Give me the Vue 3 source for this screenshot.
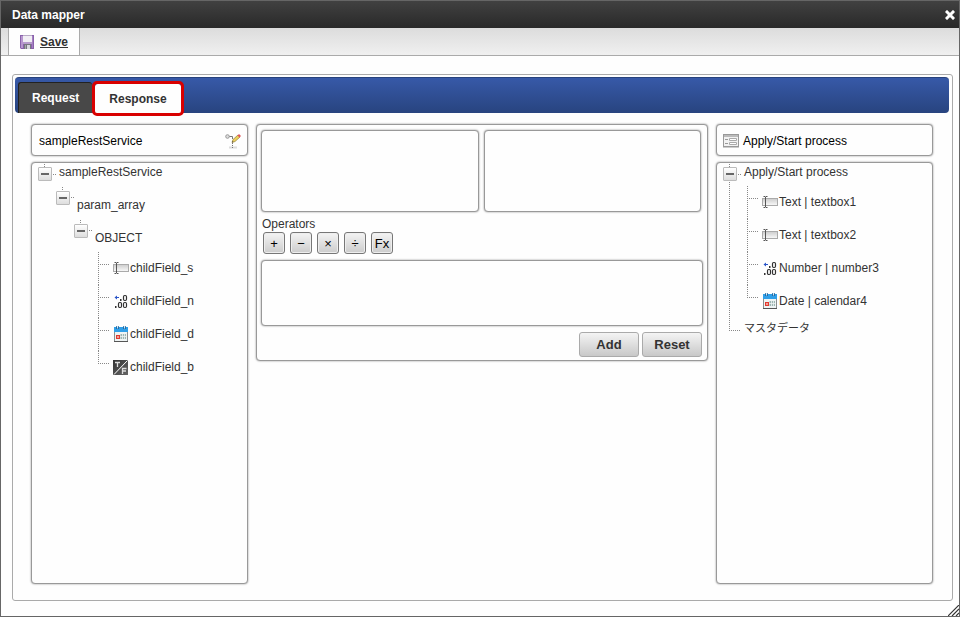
<template>
  <div class="dialog">
    <header class="title-bar">
      <h1>Data mapper</h1>
      <button class="close-button" aria-label="Close">
        <svg width="10" height="10" viewBox="0 0 10 10">
          <path d="M2 2L8 8M8 2L2 8" stroke="#fff" stroke-width="3" stroke-linecap="square" />
        </svg>
      </button>
    </header>

    <nav class="toolbar">
      <a href="#" class="save-link" @click.prevent>
        <svg width="14" height="14" viewBox="0 0 14 14">
          <path d="M0 0H14V14H1L0 13Z" fill="#8a62ab" />
          <path d="M1 1H3V13H1Z" fill="#b796cf" />
          <path d="M12 1H13V13H12Z" fill="#a57fc2" />
          <path d="M3 0H12V7H3Z" fill="#f1eef4" />
          <path d="M3 0H12V1H3Z" fill="#b9aac6" />
          <path d="M3 7H12V9H3Z" fill="#b79bcc" />
          <path d="M4 9H11V14H4Z" fill="#77777f" />
          <path d="M7 10H10V14H7Z" fill="#d8d8de" />
          <path d="M5 10H6V14H5Z" fill="#a5a5ad" />
        </svg>
        <span>Save</span>
      </a>
    </nav>

    <main class="content">
      <div class="mapper">
        <div class="tabs" role="tablist">
          <button
            v-for="tab in tabs"
            :key="tab"
            role="tab"
            :aria-selected="tab === activeTab"
            :class="['tab', { active: tab === activeTab }]"
            @click="activeTab = tab"
          >
            {{ tab }}
          </button>
        </div>

        <div class="columns">
          <section class="side">
            <div class="box side-header">
              <span class="side-title">sampleRestService</span>
              <button class="icon-button" aria-label="Edit">
                <svg width="16" height="16" viewBox="0 0 16 16">
                  <path d="M4 14.500H12" stroke="#ddd" stroke-width="2" />
                  <path d="M4 3.500H7.500V6M7.500 10V11M7.500 12V13M7.500 14V15" stroke="#777" fill="none" />
                  <circle cx="2.500" cy="3.500" r="1.800" fill="#ddd" stroke="#999" />
                  <path d="M7 9.500L8 6.500L13 2L15 4L10 8.500Z" fill="#ecd05c" stroke="#94803a" stroke-width=".7" />
                  <path d="M12.500 2.500L14 1L16 3L14.500 4.500Z" fill="#e0565b" />
                  <path d="M7 9.500L7.500 8L8.500 9Z" fill="#444" />
                </svg>
              </button>
            </div>
            <div class="box tree-box">
              <ul class="tree">
                <li class="node">
                  <div class="row root-row">
                    <button class="toggle" aria-label="Toggle sampleRestService" @click="toggle('service')"></button>
                    <span>sampleRestService</span>
                  </div>
                  <ul v-show="open.service">
                    <li class="node">
                      <div class="row branch-row">
                        <button class="toggle" aria-label="Toggle param_array" @click="toggle('param')"></button>
                        <span>param_array</span>
                      </div>
                      <ul v-show="open.param">
                        <li class="node">
                          <div class="row branch-row">
                            <button class="toggle" aria-label="Toggle OBJECT" @click="toggle('object')"></button>
                            <span>OBJECT</span>
                          </div>
                          <ul v-show="open.object">
                            <li v-for="field in serviceFields" :key="field.name" class="leaf">
                              <svg width="16" height="16" viewBox="0 0 16 16"><use :href="'#icon-' + field.type" /></svg>
                              <span>{{ field.name }}</span>
                            </li>
                          </ul>
                        </li>
                      </ul>
                    </li>
                  </ul>
                </li>
              </ul>
            </div>
          </section>

          <section class="box editor">
            <div class="operands">
              <div class="box operand"></div>
              <div class="box operand"></div>
            </div>
            <div class="operators-label">Operators</div>
            <div class="operators">
              <button v-for="op in operators" :key="op" class="operator">{{ op }}</button>
            </div>
            <textarea class="box expression" aria-label="Expression"></textarea>
            <div class="actions">
              <button class="action">Add</button>
              <button class="action">Reset</button>
            </div>
          </section>

          <section class="side">
            <div class="box side-header process-header">
              <svg width="16" height="14" viewBox="0 0 16 14">
                <rect x=".5" y=".5" width="15" height="12" fill="#f2f2f2" stroke="#999" />
                <path d="M1 2H15" stroke="#bbb" stroke-width="2" />
                <path d="M2 5.500H5M2 9.500H5" stroke="#999" />
                <path d="M6.500 4.500H13.500V6.500H6.500ZM6.500 8.500H13.500V10.500H6.500Z" fill="#fff" stroke="#aaa" />
                <path d="M0 13.500H16" stroke="#ccc" />
              </svg>
              <span class="side-title">Apply/Start process</span>
            </div>
            <div class="box tree-box">
              <ul class="tree">
                <li class="node has-next">
                  <div class="row root-row">
                    <button class="toggle" aria-label="Toggle Apply/Start process" @click="toggle('process')"></button>
                    <span>Apply/Start process</span>
                  </div>
                  <ul v-show="open.process">
                    <li v-for="field in processFields" :key="field.name" class="leaf">
                      <svg width="16" height="16" viewBox="0 0 16 16"><use :href="'#icon-' + field.type" /></svg>
                      <span>{{ field.name }}</span>
                    </li>
                  </ul>
                </li>
                <li class="leaf master">マスタデータ</li>
              </ul>
            </div>
          </section>
        </div>
      </div>
    </main>

    <svg class="resize-grip" width="11" height="11" viewBox="0 0 11 11">
      <path d="M0 11L11 0M4 11L11 4M8 11L11 8" stroke="#333" stroke-width="1.200" />
    </svg>

    <!-- field type icons -->
    <svg class="sprite" width="0" height="0" aria-hidden="true">
      <defs>
        <linearGradient id="input-fill" x1="0" y1="0" x2="0" y2="1">
          <stop offset="0" stop-color="#ccc" />
          <stop offset="1" stop-color="#fafafa" />
        </linearGradient>
        <linearGradient id="bool-fill" x1="0" y1="0" x2="1" y2="1">
          <stop offset="0" stop-color="#333" />
          <stop offset="1" stop-color="#666" />
        </linearGradient>
      </defs>
      <symbol id="icon-text" viewBox="0 0 16 16">
        <rect x=".5" y="4.500" width="15" height="7" fill="url(#input-fill)" stroke="#aaa" />
        <path d="M1.500 2.500H3L3.500 3L4 2.500H5.500M3.500 3V13M1.500 13.500H3L3.500 13L4 13.500H5.500" fill="none" stroke="#555" />
      </symbol>
      <symbol id="icon-number" viewBox="0 0 16 16">
        <path d="M3.500 4.500H6" stroke="#2a55c8" />
        <path d="M1.500 4.500L4 2.500V6.500Z" fill="#2a55c8" />
        <g fill="none" stroke="#333" stroke-width="1.200">
          <rect x="10.500" y="2.500" width="3" height="5" rx="1.200" />
          <rect x="5.500" y="9.500" width="3" height="5" rx="1.200" />
          <rect x="10.500" y="9.500" width="3" height="5" rx="1.200" />
        </g>
        <path d="M7 6H8.500V8H7ZM2 13H3.500V15H2Z" fill="#333" />
      </symbol>
      <symbol id="icon-date" viewBox="0 0 16 16">
        <rect x="1.500" y="2" width="13" height="13.500" fill="#eef4f4" stroke="#8a8f8f" />
        <path d="M1 1H15V6H1Z" fill="#2f9fe8" />
        <path d="M4.500 0V3M11.500 0V3" stroke="#1c5f94" stroke-width="2.500" />
        <path d="M4.500 0V2.500M11.500 0V2.500" stroke="#cfe9fa" />
        <path d="M7.500 8H13V13H7.500Z" fill="#9db5b2" />
        <path d="M7 10.500H13M9.500 8V13M11.500 8V13" stroke="#eef4f4" stroke-width=".8" />
        <rect x="3" y="9" width="4" height="4" fill="#e23a2e" />
        <path d="M4 11H6" stroke="#fff" />
        <path d="M1 15.500H15" stroke="#555" />
      </symbol>
      <symbol id="icon-boolean" viewBox="0 0 16 16">
        <rect x="0" y="1" width="15" height="15" fill="url(#bool-fill)" />
        <path d="M1 15.500L14.500 1.500" stroke="#fff" />
        <path d="M2 3.500H7M4.500 3.500V8" stroke="#ddd" stroke-width="1.300" />
        <path d="M9.500 15V9.500H13.500M9.500 12H13" fill="none" stroke="#ddd" stroke-width="1.300" />
      </symbol>
    </svg>
  </div>
</template>

<script setup>
import { ref, reactive } from 'vue'

const tabs = ['Request', 'Response']
const activeTab = ref('Response')

const operators = ['+', '−', '×', '÷', 'Fx']

const serviceFields = [
  { name: 'childField_s', type: 'text' },
  { name: 'childField_n', type: 'number' },
  { name: 'childField_d', type: 'date' },
  { name: 'childField_b', type: 'boolean' }
]

const processFields = [
  { name: 'Text | textbox1', type: 'text' },
  { name: 'Text | textbox2', type: 'text' },
  { name: 'Number | number3', type: 'number' },
  { name: 'Date | calendar4', type: 'date' }
]

const open = reactive({ service: true, param: true, object: true, process: true })

const toggle = (key) => {
  open[key] = !open[key]
}
</script>

<style>
body {
  background: #fff;
}
</style>

<style scoped>
.dialog {
  position: relative;
  box-sizing: border-box;
  min-height: 100vh;
  display: flex;
  flex-direction: column;
  border: 1px solid #666;
  background: #fefefe;
  font-family: "Liberation Sans", Arial, "Noto Sans CJK JP", sans-serif;
  font-size: 12px;
  color: #333;
}

button,
textarea {
  box-sizing: border-box;
  margin: 0;
  padding: 0;
  font-family: inherit;
  font-size: 12px;
}

ul {
  list-style: none;
  margin: 0;
  padding: 0;
}

.title-bar {
  display: flex;
  align-items: center;
  justify-content: space-between;
  height: 27px;
  padding: 0 4px 0 11px;
  background: linear-gradient(#414141, #292929);
}

.title-bar h1 {
  margin: 0;
  font-size: 12px;
  color: #fff;
}

.close-button,
.icon-button {
  display: flex;
  border: none;
  background: none;
}

.toolbar {
  display: flex;
  height: 27px;
  padding-left: 7px;
  border-bottom: 1px solid #aaa;
  background: linear-gradient(#dcdcdc, #f0f0f0);
}

.save-link {
  display: flex;
  align-items: center;
  gap: 6px;
  padding: 0 11px;
  border: 1px solid #aaa;
  border-width: 0 1px;
  background: #fefefe;
  color: #333;
  font-weight: bold;
}

.content {
  flex: 1;
  display: flex;
  padding: 18px 6px 15px 11px;
}

.mapper {
  flex: 1;
  display: flex;
  flex-direction: column;
  border: 1px solid #aaa;
  border-radius: 3px;
}

.tabs {
  box-sizing: border-box;
  display: flex;
  align-items: flex-end;
  gap: 3px;
  height: 36px;
  margin: 2px 3px 0 2px;
  padding-left: 3px;
  border-top: 1px solid #27427d;
  border-radius: 4px;
  background: linear-gradient(#3759a8, #28447f);
}

.tab {
  position: relative;
  height: 31px;
  padding: 0 13px;
  border: 1px solid #222;
  border-width: 1px 0 0 1px;
  border-radius: 3px 3px 0 0;
  background: #484848;
  color: #fff;
  font-weight: bold;
}

.tab.active {
  height: 29px;
  padding: 0 14px;
  border: none;
  background: #fefefe;
  color: #333;
}

.tab.active::after {
  content: "";
  position: absolute;
  inset: -3px;
  border: 3px solid #d90000;
  border-radius: 5px;
}

.columns {
  flex: 1;
  display: grid;
  grid-template-columns: 217px 1fr 217px;
  gap: 8px;
  padding: 11px 19px 16px 18px;
}

.box {
  box-sizing: border-box;
  border: 1px solid #999;
  border-radius: 4px;
  box-shadow: 0 0 2px #888;
  background: #fefefe;
}

.side {
  display: flex;
  flex-direction: column;
  gap: 6px;
}

.side-header {
  display: flex;
  align-items: center;
  justify-content: space-between;
  height: 32px;
  padding: 1px 6px 0 7px;
  color: #000;
}

.process-header {
  justify-content: flex-start;
  gap: 4px;
  padding-left: 6px;
}

.tree-box {
  flex: 1;
}

.tree {
  padding-left: 6px;
  line-height: 18px;
}

.tree ul {
  padding-left: 18px;
}

.node {
  background: repeating-linear-gradient(#888 0 1px, transparent 1px 2px) 6px 1px / 1px 6px no-repeat;
}

.node.has-next {
  background-size: 1px 100%;
}

.row {
  display: flex;
  align-items: flex-start;
  gap: 7px;
  background: repeating-linear-gradient(90deg, #888 0 1px, transparent 1px 2px) 15px 11px / 3px 1px no-repeat;
}

.root-row {
  height: 23px;
}

.root-row .toggle {
  margin-top: 4px;
}

.branch-row {
  height: 33px;
}

.branch-row .toggle {
  margin-top: 5px;
}

.branch-row span {
  padding-top: 10px;
}

.toggle {
  width: 14px;
  height: 14px;
  border: 1px solid #bbb;
  border-radius: 1px;
  background:
    linear-gradient(#666, #666) center / 8px 2px no-repeat,
    linear-gradient(#fff, #ddd);
}

.leaf {
  display: flex;
  align-items: center;
  gap: 1px;
  box-sizing: border-box;
  height: 33px;
  padding: 0 0 1px 21px;
  background:
    repeating-linear-gradient(#888 0 1px, transparent 1px 2px) 6px 0 / 1px 100% no-repeat,
    repeating-linear-gradient(90deg, #888 0 1px, transparent 1px 2px) 6px 12px / 11px 1px no-repeat;
}

.leaf:last-child {
  background-size: 1px 12px, 11px 1px;
}

.leaf.master {
  height: 20px;
  font-size: 11px;
}

.editor {
  align-self: start;
  padding: 4px 4px 3px;
}

.operands {
  display: flex;
  gap: 5px;
  padding: 1px 2px 0 0;
}

.operand {
  flex: 1;
  height: 82px;
}

.operators-label {
  padding: 4px 0 0 1px;
  line-height: 16px;
}

.operators {
  display: flex;
  gap: 5px;
  padding-left: 2px;
}

.operator {
  width: 22px;
  height: 22px;
  border: 1px solid #777;
  border-radius: 3px;
  background: linear-gradient(#f4f4f4, #ccc);
  box-shadow: inset 0 0 0 1px #eee;
  color: #000;
  font-size: 13px;
}

.expression {
  display: block;
  width: 100%;
  height: 66px;
  margin-top: 6px;
  resize: none;
}

.actions {
  display: flex;
  justify-content: flex-end;
  gap: 3px;
  padding: 6px 1px 0 0;
}

.action {
  width: 60px;
  height: 25px;
  border: 1px solid #aaa;
  border-radius: 3px;
  background: linear-gradient(#f4f4f4, #c8c8c8);
  color: #333;
  font-size: 13px;
  font-weight: bold;
}

.resize-grip {
  position: absolute;
  right: 0;
  bottom: 0;
}

.sprite {
  position: absolute;
}
</style>
